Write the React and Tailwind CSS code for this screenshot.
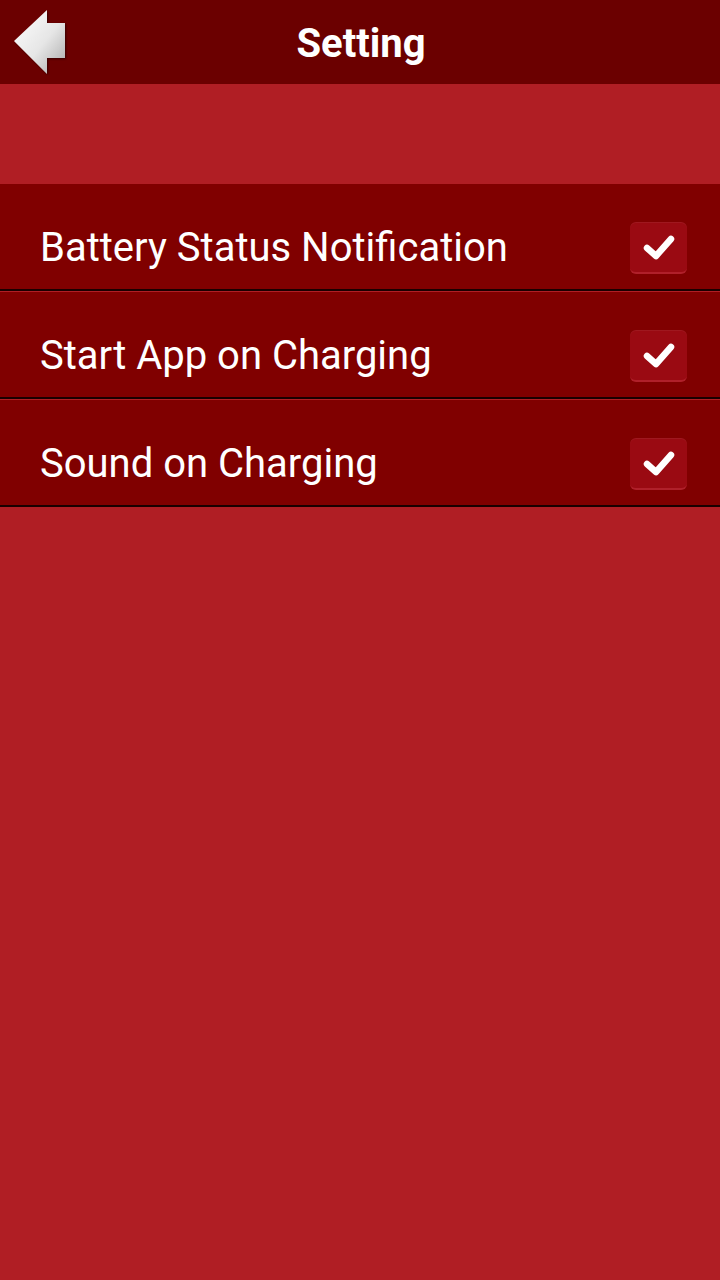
import React from "react";

const items = ["Battery Status Notification", "Start App on Charging", "Sound on Charging"];

const BackArrow = () => (
    <svg width="72" height="84" viewBox="0 0 72 84" className="absolute left-0 top-0">
        <defs>
            <linearGradient id="arrowFill" x1="0" y1="0" x2="1" y2="1">
                <stop offset="0" stopColor="#ffffff" />
                <stop offset="0.55" stopColor="#e6e6e6" />
                <stop offset="1" stopColor="#a8a8a8" />
            </linearGradient>
            <filter id="arrowShadow" x="-20%" y="-20%" width="140%" height="140%">
                <feDropShadow dx="1" dy="1" stdDeviation="1" floodColor="#000" floodOpacity="0.5" />
            </filter>
        </defs>
        <polygon
            points="14,41 47,10 47,23 65,23 65,58 47,58 47,74"
            fill="url(#arrowFill)"
            filter="url(#arrowShadow)"
        />
    </svg>
);

const CheckBox = () => (
    <div className="w-[57px] h-[52px] rounded-[6px] bg-[#9a0a12] border-b-2 border-[#b0202a] shadow-[inset_0_1px_0_rgba(255,255,255,0.06)] flex items-center justify-center">
        <svg width="36" height="30" viewBox="0 0 36 30">
            <path d="M6 16 L15 24 L30 7" fill="none" stroke="#fff" strokeWidth="6.5" strokeLinecap="round" strokeLinejoin="round" />
        </svg>
    </div>
);

export default function App() {
    return (
        <div className="w-[720px] h-[1280px] bg-[#b01e24] font-['Roboto',sans-serif] overflow-hidden">
            <div className="relative h-[84px] bg-[#6b0000] flex items-center justify-center pt-[4px]">
                <BackArrow />
                <span className="text-white font-bold text-[40px] leading-none ml-[2px]">Setting</span>
            </div>
            <div className="h-[100px]" />
            {items.map((label) => (
                <div key={label} className="mb-[1px]">
                    <div className="h-[83px] pt-[22px] bg-[#800000] flex items-center justify-between pl-[40px] pr-[33px] border-b-2 border-[#1a0000] box-content">
                        <span className="text-white text-[40px] leading-none">{label}</span>
                        <CheckBox />
                    </div>
                </div>
            ))}
        </div>
    );
}
